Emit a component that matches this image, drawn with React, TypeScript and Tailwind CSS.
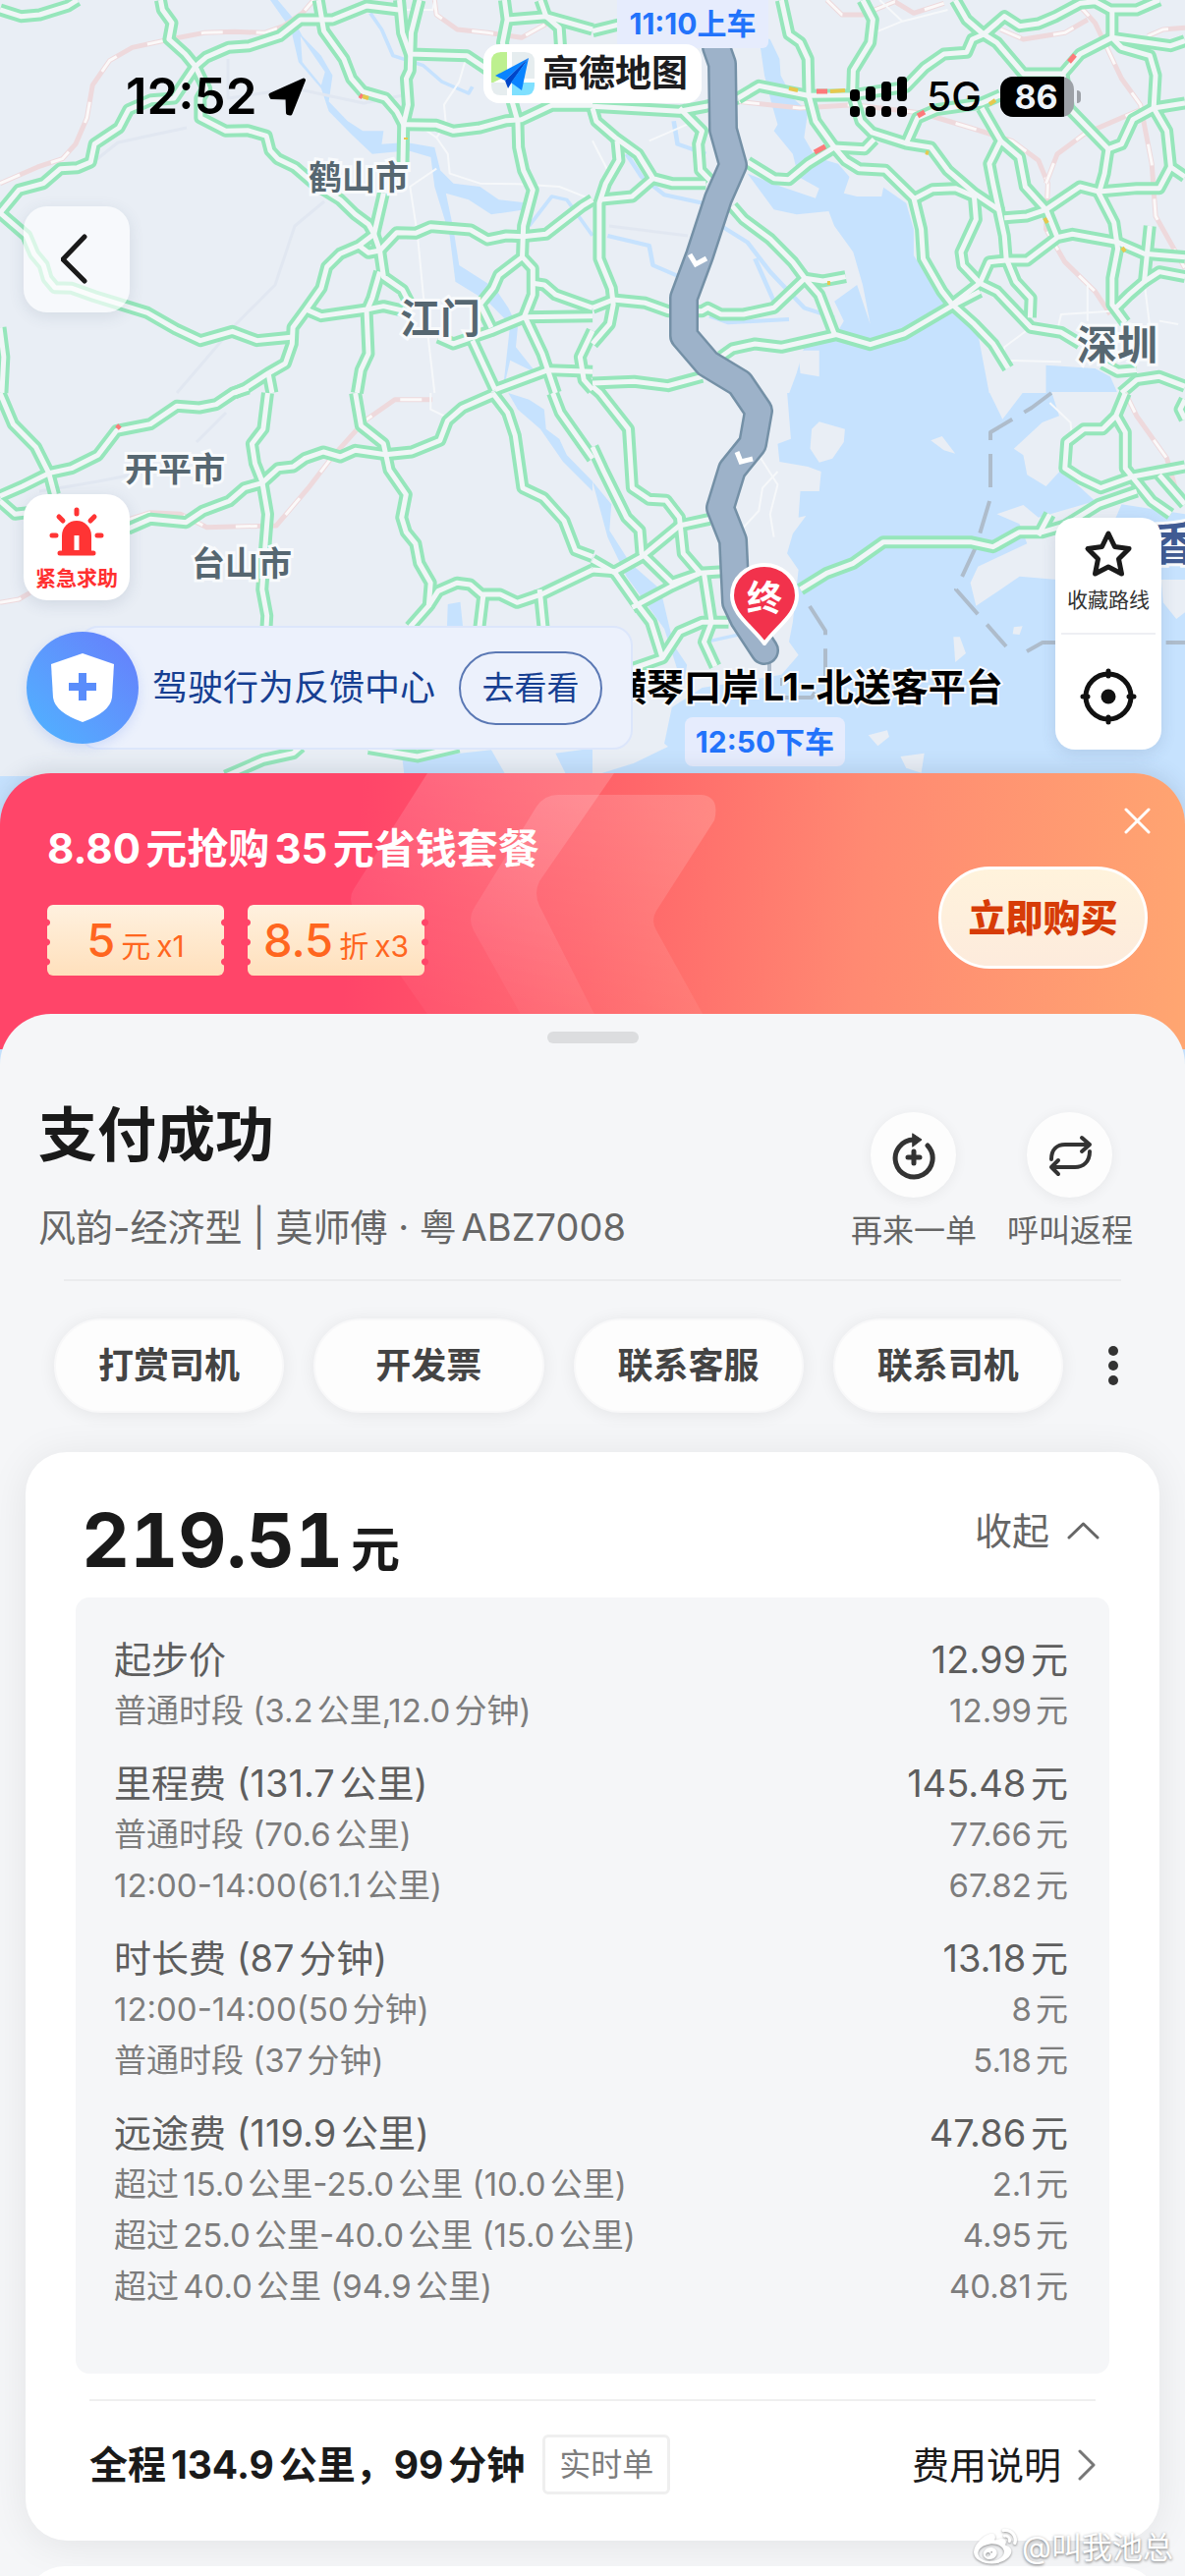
import type { ReactNode } from 'react';
import { FaWeibo } from 'react-icons/fa';

interface FareRow {
  label: string;
  price: string;
}

interface FareGroup extends FareRow {
  items: FareRow[];
}

interface MapTile {
  origin: string;
  roads: string[];
  lanes: string[];
  rails: string[];
}

const fareGroups: FareGroup[] = [
  {
    label: '起步价',
    price: '12.99元',
    items: [{ label: '普通时段 (3.2公里,12.0分钟)', price: '12.99元' }],
  },
  {
    label: '里程费 (131.7公里)',
    price: '145.48元',
    items: [
      { label: '普通时段 (70.6公里)', price: '77.66元' },
      { label: '12:00-14:00(61.1公里)', price: '67.82元' },
    ],
  },
  {
    label: '时长费 (87分钟)',
    price: '13.18元',
    items: [
      { label: '12:00-14:00(50分钟)', price: '8元' },
      { label: '普通时段 (37分钟)', price: '5.18元' },
    ],
  },
  {
    label: '远途费 (119.9公里)',
    price: '47.86元',
    items: [
      { label: '超过15.0公里-25.0公里 (10.0公里)', price: '2.1元' },
      { label: '超过25.0公里-40.0公里 (15.0公里)', price: '4.95元' },
      { label: '超过40.0公里 (94.9公里)', price: '40.81元' },
    ],
  },
];

const quickActions = ['打赏司机', '开发票', '联系客服', '联系司机'];

const routePath =
  'M728 20L729 48 735 65 736 132 746 168 731 202 712 260 696 303V342L720 370 753 390 772 418 766 452 745 478 733 517 746 550 749 613 757 630 778 662';

// Four map tiles, each drawn in its own grid and scaled into place
const tiles: MapTile[] = [
  {
    origin: 'translate(0 0) scale(0.3846 0.3333)',
    roads: [
      'M0 30L55 50 105 45 180 18 205 0',
      'M425 0L430 30 455 70 447 120 490 165 517 203 545 270 530 300 530 360 597 400 655 398 705 415 715 460 735 485 780 510 830 560 900 610 940 655 975 685 990 715 1005 765 1015 845 1065 885 1085 930',
      'M0 650L50 580 115 560 160 515 205 512 240 495 250 440 315 390 340 335 400 305 460 300 517 203 545 175 605 145 660 140 740 110 795 60 880 60 970 18 1055 30',
      'M843 0L857 95 910 180 930 240 960 280 1020 300 1050 340 1068 380',
      'M1057 0L1065 100 1085 165 1235 170 1300 220',
      'M1110 0L1088 100 1085 215 1075 240 1080 320 1068 380 1066 500',
      'M1068 380L1155 382 1200 400 1270 390 1340 368 1380 365 1460 322 1568 322',
      'M1015 590L990 715',
      'M1005 765L1050 710 1100 712 1140 692 1245 702 1290 732 1340 720 1385 722 1445 715 1540 630 1568 610',
      'M990 715L950 750 900 775 865 815 850 880 810 945 775 1000 773 1050 755 1110 710 1140 650 1185 620 1200',
      'M950 750L975 772 1005 765',
      'M1005 830L985 910 970 950 975 1080 955 1130 945 1200',
      'M810 945L850 965 970 945 1015 935 1090 955',
      'M0 650L70 720 90 775 115 810 125 850 145 878 190 880 250 905 390 955 465 1005 530 1040 615 1012 680 1040 770 1030',
      'M0 1000L10 1090 5 1200',
      'M710 1140L720 1200',
      'M1335 0L1342 60 1330 130 1345 270 1370 370 1372 450 1385 520 1410 580 1385 690 1382 785 1320 840 1305 880 1270 930 1300 1000',
      'M1382 785L1410 820 1410 900 1388 965 1435 1080 1470 1200',
      'M1430 0L1445 50 1480 85 1485 170',
      'M1342 60L1445 50 1568 90',
      'M1410 865L1440 870 1470 900 1568 940',
      'M1160 1030L1200 1050 1300 1010 1388 968 1568 965',
      'M1250 1040L1310 1190',
      'M1310 1190L1450 1130 1568 1135',
      'M1568 1010L1535 1090 1545 1160 1568 1190',
    ],
    lanes: [
      'M1235 170L1215 250 1175 320 1180 380 1155 420 1185 470 1190 530 1270 560 1370 562 1480 570 1568 610',
      'M1060 370L1130 400 1155 420',
      'M1155 515L1085 570 1105 720 1120 900 1150 1200',
      'M1055 30L1145 30 1150 0',
    ],
    rails: [
      'M0 560L100 510 165 485 200 440 230 360 245 260 290 185 350 145 450 120 540 100 620 97 700 100 750 80 800 40 830 0',
      'M1150 0L1155 45 1210 90 1290 100 1380 115 1450 70',
    ],
  },
  {
    origin: 'translate(603 0) scale(0.3846 0.3333)',
    roads: [
      'M500 0L520 105 550 130 570 180 572 290 590 370 640 450 670 490 705 515 775 520 850 605 870 700 875 790 925 890 952 930 1010 990 1060 1050 1100 1125',
      'M715 0L742 60 735 130 690 215 688 290 710 370 740 405 830 438 895 450 940 520 1010 590 1075 640 1090 720 1095 790 1120 860 1160 910 1158 970',
      'M385 300L440 262 570 292 690 290 830 265 880 205 930 165 990 160 1005 120 1035 105 1090 50 1130 80 1180 72 1225 50 1290 10 1330 5 1370 30 1440 30 1500 0',
      'M960 0L990 60 1035 105 1070 130 1140 225 1245 225 1290 165 1375 115 1530 140 1568 125',
      'M1375 30L1375 115 1400 145 1475 170 1490 230 1485 330 1520 400 1530 510 1568 540',
      'M1245 225L1260 330 1365 455 1400 440 1430 365 1485 330 1568 315',
      'M1365 455L1355 530 1340 590 1380 680 1390 760 1375 850 1375 930 1410 985',
      'M1530 510L1500 575 1440 575 1340 585 1290 570 1200 640 1150 660 1090 665',
      'M830 438L860 360 910 335 1030 315 1080 290',
      'M1030 330L1080 430 1050 500 1060 560 1075 640',
      'M1080 430L1130 480 1145 570 1200 640 1230 725',
      'M1095 795L1150 795 1230 725 1270 715 1390 740 1460 775 1568 785',
      'M1095 795L1050 800 1025 865 952 930',
      'M855 605L900 578 960 575 1010 600 1015 670 975 770 980 810 1025 865 1070 890 1160 1000 1240 1015 1290 1050',
      'M410 495L480 545 520 548 570 500 640 450 720 455 745 425',
      'M370 630L400 670 470 730 530 800 562 850 600 900 640 1020',
      'M562 850L610 858 670 845',
      'M0 940L55 915 140 925 200 950 290 950 305 940 340 960 400 960 480 940 562 850',
      'M340 1090L370 1065 430 1050 500 1060 645 1022 735 1052 825 1020 950 935 1025 890',
      'M0 1170L110 1165 200 1178 290 1150',
      'M0 330L10 370 60 420 120 470 160 545 210 560 300 560',
      'M0 325L230 340 300 325 385 300',
      'M230 330L290 400 280 440 285 520 310 550',
      'M65 430L70 490 35 560 18 620 18 790 50 880 55 930 45 990 0 1050',
      'M18 610L105 600 160 545',
      'M0 95L70 75',
      'M1475 690L1460 860 1420 900 1385 940',
      'M1460 860L1500 830 1568 845',
      'M1350 1110L1390 1135 1440 1130',
      'M1400 1200L1440 1160 1500 1150 1568 1180',
    ],
    lanes: [
      'M150 430L270 370 M745 100L820 65 940 30 M820 65L760 0',
      'M1160 1000L1090 1060 1085 1100 1240 1105 M1230 1010L1240 960 1370 950 1400 940',
      'M1460 860L1475 1000 1470 1060 M1310 870L1310 980 M1500 980L1550 990',
      'M0 430L40 520',
    ],
    rails: [
      'M385 310L550 330 690 320 870 345 1000 390 1110 430 1180 490 1205 560 1200 700 1250 800 1330 890 1370 960',
      'M1275 0L1330 70 1400 240 1450 320 1480 500 1490 660 1568 820',
      'M1200 560L1230 470 1300 410 1440 340 1568 310',
      'M1080 90L1140 120 1250 100 1310 60',
      'M620 0L660 45 715 45 800 5 850 40 930 10',
      'M1470 110L1510 90 1568 85',
    ],
  },
  {
    origin: 'translate(0 400) scale(0.3827 0.3333)',
    roads: [
      'M0 0L35 95 95 165 130 245 145 310',
      'M0 315L60 285 130 245 190 230 260 190 310 115 400 95 470 40 530 45 575 35 620 0 660 -15',
      'M0 330L40 370 75 365',
      'M712 0L700 110 670 155 678 215 697 270 712 370 705 470 697 600 710 680 708 720',
      'M340 415L400 385 495 395 540 360 610 330 650 290 697 275 740 230 780 225 810 200 860 180 905 195 945 175 1025 188 1095 180 1170 145 1190 85 1230 45 1310 5',
      'M945 0L960 100 1020 155 1035 235 1080 310 1068 380 1080 425 1105 460 1115 520 1145 580 1140 650 1090 715',
      'M1140 650L1165 605 1215 580 1250 585 1280 615 1330 615 1375 640 1440 615 1576 540',
      'M1285 620L1275 715',
      'M1435 600L1445 715',
      'M1310 0L1350 60 1370 130 1390 290 1445 320 1500 390 1530 480 1576 500',
      'M1470 0L1490 60 1576 200',
      'M600 1170L700 1120 780 1100 800 1080',
      'M980 1085L1110 1110 1220 1080',
    ],
    lanes: ['M1145 0L1145 50 1190 75'],
    rails: [
      'M0 640L50 630 80 610',
      'M345 385L400 365 480 370 550 410 735 405 820 290 880 200 970 85 1050 20 1150 20',
    ],
  },
  {
    origin: 'translate(603 400) scale(0.3846 0.3333)',
    roads: [
      'M0 -20L20 0 95 110 105 290 150 325 195 328 230 380 240 490 285 550 345 545',
      'M0 165L30 240 90 380 125 420 130 490 210 580 285 550',
      'M230 405L310 385',
      'M0 540L60 545 130 500 230 405',
      'M0 510L60 550 115 640 155 700 185 810',
      'M105 655L210 590 285 550',
      'M110 840L185 810 230 730 290 700 360 700',
      'M295 550L315 700 295 760 325 835',
      'M550 600L620 550 690 520 770 455 1000 455 1060 470 1130 425 1190 425 1250 405 1340 340 1440 300',
      'M1180 435L1210 370',
      'M1410 0L1385 70 1350 110 1300 110 1255 150 1250 230 1290 260 1345 290 1430 255 1568 225',
      'M1385 70L1410 120 1410 230 1480 330 1530 370',
      'M1500 250L1568 340',
      'M1568 20L1555 50 1568 80',
    ],
    lanes: [
      'M1210 30L1265 90 1270 150',
      'M440 190L490 280 470 370 480 440',
      'M490 240L450 290 440 360 400 410',
    ],
    rails: ['M1410 0L1440 70 1520 200 1545 300'],
  },
];

const cityLabels = [
  { name: '鹤山市', place: 'left-[314px] top-[160px] text-[34px]' },
  { name: '江门', place: 'left-[407px] top-[303px] text-[41px]' },
  { name: '深圳', place: 'left-[1096px] top-[330px] text-[41px]' },
  { name: '开平市', place: 'left-[127px] top-[457px] text-[34px]' },
  { name: '台山市', place: 'left-[195px] top-[553px] text-[34px]' },
];

const MapCanvas = () => (
  <svg
    className="absolute inset-x-0 top-0 h-[1120px] w-full bg-[#c6e2fe]"
    viewBox="0 0 1206 1120"
    preserveAspectRatio="xMidYMin slice"
    fill="none"
    strokeLinejoin="round"
    aria-hidden="true"
  >
    <path d="M0 0H1206V400H0ZM0 400H603V790H0Z" fill="#e9eef5" />
    <g transform="translate(603 0) scale(0.3846 0.3333)" fill="#c6e2fe">
      <path d="M440 110L470 120 495 180 498 230 530 300 570 340 560 420 590 480 650 500 680 540 665 590 700 600 765 600 770 572 830 620 850 700 850 780 900 870 950 940 1020 1020 1050 1202 520 1202 540 1140 560 1060 640 1030 665 980 640 920 700 870 735 990 715 870 690 770 640 690 625 645 540 655 480 640 410 530 500 570 590 605 600 575 545 540 530 470 480 400 490 380 475 320 455 230Z" />
      <path d="M1200 1115L1330 1125 1370 1150 1390 1202H1200Z" />
      <path d="M520 1090L545 1080 550 1140 600 1150 600 1070 560 1070Z" fill="#e9eef5" />
    </g>
    <g transform="translate(0 400) scale(0.3846 0.3333)" fill="#c6e2fe">
      <path d="M1185 645L1218 638 1225 715 1183 712ZM1065 1120L1300 1090 1340 1170H1070ZM1470 1100L1568 1085V1170H1500Z" />
      <path d="M1345 0L1400 20 1440 50 1445 110 1480 140 1500 190 1568 270V300L1490 210 1430 110 1370 50Z" />
    </g>
    <g transform="scale(0.3846 0.3333)">
      <path d="M715 0H735L775 55 800 110 850 170 880 230 870 310 920 370 960 400 1015 400 1010 440 1075 435 1150 450 1165 520 1200 560 1270 570 1320 610 1400 620 1390 640 1300 655 1240 610 1180 590 1200 700 1215 810 1310 880 1345 940 1370 1000 1365 1060 1420 1140 1350 1100 1330 1200 1350 990 1290 920 1205 860 1190 720 1150 570 1140 480 1080 460 985 470 930 410 870 340 850 270 790 190 770 90Z M795 110L800 190 850 260 860 220Z" fill="#c6e2fe" fillRule="evenodd" />
      <path d="M980 40L1010 90 1040 170 1120 200 1170 250 1240 285 1250 265M1400 690L1460 600 1500 610 1568 720" stroke="#c6e2fe" strokeWidth="10" />
    </g>
    <g transform="translate(603 0) scale(0.3846 0.3333)" stroke="#c6e2fe" strokeWidth="12">
      <path d="M90 470L130 540 190 595 310 625M340 690L410 740 470 830 560 940 640 970M310 965L360 985 520 975M430 790L480 920M40 720L150 750 160 810 240 850M215 370L225 440 300 470" />
    </g>

    {/* coastline and islands of the lower right tile */}
    <g transform="translate(603 400) scale(0.3846 0.3333)" fill="#e9eef5">
      <path d="M0 -3H515L525 140 490 155 495 210 570 225 605 240 600 300 550 300 545 380 565 375 530 430 515 490 545 540 530 700 520 760 545 800 500 860 400 880 290 900 210 960 190 1070 200 1080 110 1130 0 1170Z" />
      <path d="M580 110L600 88 668 110 665 150 635 200 600 212 576 170ZM895 145L925 132 960 185 930 175Z" />
      <path d="M1050 -3H1140L1085 80ZM1215 -3H1568V370L1400 340 1385 380 1300 400 1230 480V570L1130 560 1080 600 1015 650 1000 580 1020 530 1150 460 1130 400 1070 370 1140 342 1180 380 1270 350 1330 330 1240 235 1200 285 1150 250 1140 190 1115 170 1190 90 1235 70Z" />
      <path d="M955 745L972 745 988 795 960 822ZM730 1045L780 1030 785 1050 755 1078ZM815 1110L878 1100 870 1160 830 1145ZM1115 715L1138 712 1130 738 1112 736ZM1505 570L1568 570V670L1545 690 1510 640Z" />
      <path d="M0 270L50 340 45 420 100 520 180 600 215 770 250 830 240 900 190 720 90 560 40 440Z" fill="#c6e2fe" />
      <path d="M300 760L400 735" stroke="#c6e2fe" strokeWidth="10" />
    </g>
    <path d="M1070 400L1050 415 1008 440V507L993 557 973 600 1024 658M1045 663L1061 654H1206M824 617L840 642V690L826 710H796V690M783 665V700" stroke="#aebccb" strokeWidth="4" strokeDasharray="34 14" />
    <path d="M95 165L120 145 190 130M180 400L240 330 280 290 300 230 330 205M232 60V100L300 90 370 105 420 95M40 500L100 490 150 480M200 450L230 420M620 230L700 240" stroke="#e1e7f1" strokeWidth="3" />

    {tiles.map((tile) => (
      <g key={tile.origin} transform={tile.origin}>
        {tile.rails.map((d) => (
          <g key={d}>
            <path d={d} stroke="#eed9dc" strokeWidth="5" vectorEffect="non-scaling-stroke" />
            <path d={d} stroke="#fbf9f9" strokeWidth="3" strokeDasharray="22 34" vectorEffect="non-scaling-stroke" />
          </g>
        ))}
        {tile.lanes.map((d) => (
          <path key={d} d={d} stroke="#f6f8fa" strokeWidth="2" vectorEffect="non-scaling-stroke" />
        ))}
        {tile.roads.map((d) => (
          <path key={d} d={d} stroke="#96e6bb" strokeWidth="13" vectorEffect="non-scaling-stroke" />
        ))}
      </g>
    ))}
    {tiles.map((tile) => (
      <g key={tile.origin} transform={tile.origin}>
        {tile.roads.map((d) => (
          <path key={d} d={d} stroke="#f1f6f7" strokeWidth="5" vectorEffect="non-scaling-stroke" />
        ))}
      </g>
    ))}

    <path d="M366 97L369 99M829 155L840 149M831 93H842M934 118L941 114M1088 63L1094 56M119 436L122 433" stroke="#fd7a7a" strokeWidth="5" />
    <path d="M369 98L375 100M413 140V142M803 90L812 92M845 93L860 92M1007 106L1013 102M942 155L945 156M1063 222L1066 227M842 288H845M1142 252L1145 256" stroke="#e6c84e" strokeWidth="4" />

    <path d={routePath} stroke="#7490a6" strokeWidth="30" strokeLinecap="round" />
    <path d={routePath} stroke="#9db2c9" strokeWidth="25" strokeLinecap="round" />
    <path d="M702 259L708 269 719 263M750 460L754 470 766 467" stroke="#fff" strokeWidth="5" strokeLinejoin="miter" />

    <path d="M778 655C766 638 745 626 745 606A33 31 0 0 1 811 606C811 626 790 638 778 655Z" fill="#f2324c" stroke="#fff" strokeWidth="4" />
  </svg>
);

const StatusBar = () => (
  <div className="relative flex h-[64px] items-center justify-between pr-[106px] pl-[128px]">
    <div className="flex items-center gap-[12px]">
      <span className="text-[51px] leading-[60px] font-semibold text-black">12:52</span>
      <svg width="39" height="39" viewBox="0 0 39 39" aria-hidden="true">
        <path d="M36 2.500L2.500 17.500 3.500 20 19.500 20.500 20 36 22.500 36.500Z" fill="#000" stroke="#000" strokeWidth="4" strokeLinejoin="round" />
      </svg>
    </div>
    <div className="flex items-center gap-[19px]">
      <svg width="59" height="42" viewBox="0 0 59 42" aria-hidden="true">
        <rect x="0" y="14" width="10" height="12" rx="4" />
        <rect x="16" y="11" width="10" height="15" rx="4" />
        <rect x="32" y="6" width="10" height="20" rx="4" />
        <rect x="48" y="1" width="10" height="25" rx="4" />
        <rect x="0" y="31" width="10" height="11" rx="4" />
        <rect x="16" y="31" width="10" height="11" rx="4" />
        <rect x="32" y="31" width="10" height="11" rx="4" />
        <rect x="48" y="31" width="10" height="11" rx="4" />
      </svg>
      <span className="text-[41px] leading-[48px] font-medium text-black">5G</span>
      <div className="flex items-center gap-[3px]">
        <div className="flex h-[41px] w-[75px] overflow-hidden rounded-[13px] bg-[#9da1a7]">
          <span className="w-[65px] bg-black pl-[8px] text-center text-[34px] leading-[41px] font-bold text-[#eef3f8]">86</span>
        </div>
        <span className="h-[13px] w-[4px] rounded-r-full bg-[#9da1a7]" />
      </div>
    </div>
  </div>
);

const BrandTag = () => (
  <div className="absolute top-[45px] left-[492px] flex h-[60px] w-[222px] items-center gap-[8px] rounded-[16px] bg-white pl-[8px]">
    <svg width="44" height="44" viewBox="0 0 44 44" aria-hidden="true">
      <path d="M10 0H16V24L0 32V10Q0 0 10 0Z" fill="#bdf08f" />
      <path d="M21 0H34Q44 0 44 10V27H21Z" fill="#e6edef" />
      <path d="M21 31H44V34Q44 44 34 44H21Z" fill="#7fe0ff" />
      <path d="M0 31H16V44H10Q0 44 0 34Z" fill="#e6edef" />
      <path d="M38 6L4 24 14 29Z" fill="#0a84ff" />
      <path d="M38 6L14 29 17 37 20 32Z" fill="#0046c8" />
      <path d="M38 6L20 31 31 39Z" fill="#0a84ff" />
    </svg>
    <span className="text-[37px] leading-[44px] font-bold whitespace-nowrap text-[#1d1d1f]">高德地图</span>
  </div>
);

const ShieldIcon = () => (
  <svg width="64" height="70" viewBox="0 0 64 70" aria-hidden="true">
    <path d="M32 0L64 11 62 45Q60 60 32 70Q4 60 2 45L0 11Z" fill="#fff" />
    <path d="M32 20V48M18 34H46" stroke="#5a8dfb" strokeWidth="8" />
  </svg>
);

const MapControls = () => (
  <>
    <button type="button" aria-label="返回" className="absolute top-[210px] left-[24px] flex h-[108px] w-[108px] items-center justify-center rounded-[24px] bg-white/65 shadow-[0_4px_16px_rgba(60,80,110,0.12)]">
      <svg width="32" height="52" viewBox="0 0 32 52" fill="none" stroke="#1a1a1a" strokeWidth="5" strokeLinecap="round" strokeLinejoin="round" aria-hidden="true">
        <path d="M24 3L2 26 24 48" />
      </svg>
    </button>
    <button type="button" className="absolute top-[503px] left-[24px] flex h-[108px] w-[108px] flex-col items-center rounded-[24px] bg-white pt-[13px] shadow-[0_4px_16px_rgba(60,80,110,0.14)]">
      <svg width="56" height="50" viewBox="0 0 56 50" fill="none" stroke="#ff3434" strokeWidth="5" strokeLinecap="round" aria-hidden="true">
        <path d="M28 3V7M10 10L14 14M46 10L42 14M3 29H7M49 29H53M11 47H45" />
        <path d="M13 46V29A15 15 0 0 1 43 29V46Z" fill="#ff3434" stroke="none" />
        <path d="M28 29V44" stroke="#fff" strokeLinecap="butt" />
      </svg>
      <span className="mt-[8px] text-[21px] leading-[30px] font-bold text-[#ff3030]">紧急求助</span>
    </button>
    <div className="absolute top-[527px] right-[24px] flex h-[236px] w-[108px] flex-col items-center rounded-[20px] bg-white shadow-[0_4px_16px_rgba(60,80,110,0.14)]">
      <button type="button" className="flex flex-col items-center pt-[12px]">
        <svg width="50" height="50" viewBox="0 0 50 50" fill="none" stroke="#1a1a1a" strokeWidth="5" strokeLinejoin="round" aria-hidden="true">
          <path d="M25 4L31.500 17.500 46 19.500 35.500 30 38.500 45 25 38 11.500 45 14.500 30 4 19.500 18.500 17.500Z" />
        </svg>
        <span className="mt-[7px] text-[21px] leading-[30px] text-[#333]">收藏路线</span>
      </button>
      <div className="mt-[18px] h-[2px] w-[96px] bg-[#eeeff3]" />
      <button type="button" aria-label="定位" className="flex flex-1 items-center pt-[8px]">
        <svg width="58" height="58" viewBox="0 0 58 58" fill="none" stroke="#111" strokeWidth="5" strokeLinecap="round" aria-hidden="true">
          <circle cx="29" cy="29" r="23" />
          <path d="M29 3V8M29 50V55M3 29H8M50 29H55" />
          <circle cx="29" cy="29" r="7.500" fill="#111" stroke="none" />
        </svg>
      </button>
    </div>
    <div className="absolute top-[637px] left-[27px] flex h-[126px] items-center">
      <div className="absolute inset-y-0 right-0 left-[53px] rounded-[20px] border-2 border-[#dce6fb] bg-[#ecf1fc]" />
      <div className="relative flex h-[114px] w-[114px] items-center justify-center rounded-full bg-linear-to-tr from-[#4db4ff] to-[#667cfb] shadow-[0_4px_12px_rgba(90,130,240,0.2)]">
        <ShieldIcon />
      </div>
      <span className="relative ml-[14px] text-[36px] leading-[48px] text-[#163f92]">驾驶行为反馈中心</span>
      <button type="button" className="relative mr-[31px] ml-[24px] h-[75px] w-[146px] rounded-full border-2 border-[#5a78b4] text-[33px] leading-[48px] text-[#163f92]">
        去看看
      </button>
    </div>
  </>
);

const MapOverlay = () => (
  <section className="relative h-[787px] overflow-hidden">
    {cityLabels.map((city) => (
      <span key={city.name} className={`absolute leading-[42px] font-bold whitespace-nowrap text-[#566771] [-webkit-text-stroke:6px_#f8fafc] [paint-order:stroke_fill] ${city.place}`}>
        {city.name}
      </span>
    ))}
    <span className="absolute top-[525px] left-[1172px] text-[46px] leading-[56px] font-bold whitespace-nowrap text-[#405b93] [-webkit-text-stroke:6px_#f8fafc] [paint-order:stroke_fill]">香</span>
    <span className="absolute top-[585px] left-[760px] text-[36px] leading-[48px] font-bold text-white">终</span>
    <span className="absolute top-[675px] left-[620px] text-[38px] leading-[48px] font-bold whitespace-nowrap text-black [-webkit-text-stroke:4px_#f8fafc] [paint-order:stroke_fill]">横琴口岸L1-北送客平台</span>
    <span className="absolute top-0 left-[628px] h-[49px] w-[154px] rounded-b-[6px] bg-[#e6ecfd] text-center text-[30px] leading-[48px] font-bold text-[#2273fb] [text-autospace:no-autospace]">11:10上车</span>
    <span className="absolute top-[730px] left-[697px] h-[50px] w-[163px] rounded-[8px] bg-[#e6ecfd] text-center text-[30px] leading-[50px] font-bold text-[#2273fb] [text-autospace:no-autospace]">12:50下车</span>
    <BrandTag />
    <div className="pt-[66px]">
      <StatusBar />
    </div>
    <MapControls />
  </section>
);

const Coupon = ({ value, unit, count }: { value: string; unit: string; count: string }) => (
  <div className="relative flex h-[72px] w-[180px] items-baseline justify-center gap-[6px] rounded-[6px] bg-linear-to-b from-[#fff1df] to-[#ffe0bc] text-[30px] leading-[72px] text-[#ff661f]">
    <span className="absolute top-[8px] -left-[4px] h-[60px] w-[7px] bg-[radial-gradient(circle_at_center,#ff4569_3px,transparent_4px)] bg-[length:7px_20px]" />
    <span className="absolute top-[8px] -right-[4px] h-[60px] w-[7px] bg-[radial-gradient(circle_at_center,#ff4569_3px,transparent_4px)] bg-[length:7px_20px]" />
    <span className="text-[47px] font-medium">{value}</span>
    <span>{unit}</span>
    <span>{count}</span>
  </div>
);

const PromoBanner = () => (
  <section className="relative flex h-[281px] justify-between overflow-hidden rounded-t-[52px] bg-[linear-gradient(95deg,#ff4569_0%,#ff4569_30%,#ff6269_50%,#ff8972_72%,#ffa671_100%)] pr-[38px] pl-[48px] shadow-[0_-4px_20px_rgba(60,80,110,0.15)]">
    <svg className="absolute top-0 left-[340px]" width="420" height="281" viewBox="0 0 420 281" aria-hidden="true">
      <defs>
        <linearGradient id="wing" x1="0.6" y1="0" x2="0.3" y2="1">
          <stop offset="0" stopColor="#fff" stopOpacity="0.16" />
          <stop offset="1" stopColor="#fff" stopOpacity="0.02" />
        </linearGradient>
      </defs>
      <path d="M95 0H285L209 110Q203 122 209 135L283 281H120L20 138Q14 128 20 118Z" fill="url(#wing)" />
      <path d="M228 22H374Q393 24 387 48L328 140Q322 150 328 160L395 281H210L142 160Q136 148 142 138L206 34Q214 22 228 22Z" fill="url(#wing)" />
    </svg>
    <div className="relative pt-[53px]">
      <h2 className="text-[42px] leading-[48px] font-bold whitespace-nowrap text-white">8.80元抢购35元省钱套餐</h2>
      <div className="mt-[33px] flex gap-[24px]">
        <Coupon value="5" unit="元" count="x1" />
        <Coupon value="8.5" unit="折" count="x3" />
      </div>
    </div>
    <div className="relative flex flex-col items-end">
      <button type="button" aria-label="关闭" className="mt-[34px] -mr-[4px] p-[1px]">
        <svg width="27" height="27" viewBox="0 0 27 27" stroke="#fff" strokeWidth="3" strokeLinecap="round" aria-hidden="true">
          <path d="M2 2L25 25M25 2L2 25" />
        </svg>
      </button>
      <button type="button" className="mt-[32px] h-[104px] w-[213px] rounded-full border-[3px] border-white bg-linear-to-b from-[#fff3dc] to-[#fdebdc] text-[38px] leading-[48px] font-black text-[#d73c07]">
        立即购买
      </button>
    </div>
  </section>
);

const RoundAction = ({ label, children }: { label: string; children: ReactNode }) => (
  <button type="button" className="flex flex-col items-center">
    <span className="flex h-[87px] w-[87px] items-center justify-center rounded-full bg-[#fdfdfd] shadow-[0_2px_14px_rgba(0,0,0,0.06)]">
      {children}
    </span>
    <span className="mt-[14px] text-[32px] leading-[40px] text-[#666]">{label}</span>
  </button>
);

const TripHeader = () => (
  <header className="flex items-end justify-between pr-[53px] pl-[39px]">
    <div>
      <h1 className="text-[60px] leading-[72px] font-bold text-[#1a1a1a]">支付成功</h1>
      <p className="mt-[34px] text-[38px] leading-[48px] text-[#666]">风韵-经济型 | 莫师傅 · 粤ABZ7008</p>
    </div>
    <div className="flex gap-[31px]">
      <RoundAction label="再来一单">
        <svg width="50" height="50" viewBox="0 0 50 50" fill="none" stroke="#333" strokeWidth="5" strokeLinecap="round" aria-hidden="true">
          <path d="M39 15A19 19 0 1 1 25 9M25 21V33M19 27H31" />
          <path d="M24 3L33 9 24 16Z" fill="#333" strokeWidth="1" strokeLinejoin="round" />
        </svg>
      </RoundAction>
      <RoundAction label="呼叫返程">
        <svg width="50" height="50" viewBox="0 0 50 50" fill="none" stroke="#333" strokeWidth="4" strokeLinecap="round" strokeLinejoin="round" aria-hidden="true">
          <path d="M6 29C6 19 12 14 20 14H45M37 7L45 14 37 21M45 21C45 32 38 37 30 37H6M13 30L6 37 13 44" />
        </svg>
      </RoundAction>
    </div>
  </header>
);

const FareTable = () => (
  <table className="w-full border-separate border-spacing-0">
    {fareGroups.map((group, index) => (
      <tbody key={group.label}>
        <tr className="text-[38px] leading-[52px] text-[#5e5e5e]">
          <th scope="row" className={index > 0 ? 'pt-[22px] text-left font-normal' : 'text-left font-normal'}>{group.label}</th>
          <td className={index > 0 ? 'pt-[22px] text-right' : 'text-right'}>{group.price}</td>
        </tr>
        {group.items.map((item) => (
          <tr key={item.label} className="text-[33px] leading-[52px] text-[#7d7d7d]">
            <td>{item.label}</td>
            <td className="text-right">{item.price}</td>
          </tr>
        ))}
      </tbody>
    ))}
  </table>
);

const FareCard = () => (
  <section className="mx-[26px] mt-[40px] rounded-[42px] bg-white px-[51px] pt-[39px] pb-[47px] shadow-[0_4px_40px_rgba(0,0,0,0.08)]">
    <div className="flex h-[96px] items-start justify-between pr-[10px] pl-[6px]">
      <p className="flex items-baseline gap-[8px] leading-[100px] font-bold text-[#1a1a1a]">
        <span className="text-[76px] tabular-nums">219.51</span>
        <span className="text-[50px]">元</span>
      </p>
      <button type="button" className="mt-[17px] flex items-center gap-[18px] text-[38px] leading-[48px] text-[#666]">
        收起
        <svg width="33" height="20" viewBox="0 0 33 20" fill="none" stroke="#666" strokeWidth="3" strokeLinecap="round" strokeLinejoin="round" aria-hidden="true">
          <path d="M2 17L16.500 3 31 17" />
        </svg>
      </button>
    </div>
    <div className="mt-[13px] rounded-[14px] bg-[#f5f6f8] pt-[37px] pr-[42px] pb-[63px] pl-[39px]">
      <FareTable />
    </div>
    <div className="mx-[14px] mt-[26px] h-[2px] bg-[#efefef]" />
    <div className="mx-[14px] mt-[34px] flex h-[61px] items-center justify-between">
      <div className="flex items-center gap-[18px]">
        <span className="text-[39px] leading-[48px] font-bold text-[#1a1a1a]">全程134.9公里，99分钟</span>
        <span className="rounded-[6px] border-[3px] border-[#efefef] px-[14px] text-[32px] leading-[55px] text-[#7d7d7d]">实时单</span>
      </div>
      <a href="#fare" className="flex items-center gap-[17px] text-[38px] leading-[48px] text-[#1a1a1a]">
        费用说明
        <svg width="18" height="32" viewBox="0 0 18 32" fill="none" stroke="#777" strokeWidth="3" strokeLinecap="round" strokeLinejoin="round" aria-hidden="true">
          <path d="M2 2L16 16 2 30" />
        </svg>
      </a>
    </div>
  </section>
);

export default function App() {
  return (
    <main className="relative flex h-screen flex-col overflow-hidden bg-[#c6e2fe] font-[Inter,'Noto_Sans_CJK_SC',sans-serif] [text-autospace:normal]">
      <MapCanvas />
      <MapOverlay />
      <PromoBanner />
      <div className="relative -mt-[36px] flex-1 overflow-hidden rounded-t-[52px] bg-[#f5f6f8] pt-[18px]">
        <div className="mx-auto h-[12px] w-[93px] rounded-full bg-[#dcdddf]" />
        <div className="mt-[57px]">
          <TripHeader />
        </div>
        <div className="mx-[65px] mt-[29px] h-[2px] bg-[#ebecee]" />
        <div className="mt-[38px] flex items-center pr-[68px] pl-[55px]">
          <div className="grid flex-1 grid-cols-4 gap-[30px]">
            {quickActions.map((action) => (
              <button key={action} type="button" className="h-[96px] rounded-full border-2 border-[#f8f8f9] bg-[#fdfdfd] text-[36px] leading-[48px] font-bold text-[#444] shadow-[0_2px_18px_rgba(0,0,0,0.07)]">
                {action}
              </button>
            ))}
          </div>
          <button type="button" aria-label="更多" className="ml-[46px] flex w-[10px] flex-col gap-[5px]">
            <span className="h-[10px] rounded-full bg-[#333]" />
            <span className="h-[10px] rounded-full bg-[#333]" />
            <span className="h-[10px] rounded-full bg-[#333]" />
          </button>
        </div>
        <FareCard />
        <div className="mx-[26px] mt-[26px] h-[80px] rounded-[42px] bg-white" />
      </div>
      <div className="absolute right-[12px] bottom-[7px] flex items-center gap-[5px] text-[31px] leading-[40px] text-white [text-shadow:0_1px_3px_rgba(0,0,0,0.55)]">
        <FaWeibo className="h-[44px] w-[44px] drop-shadow-[0_1px_1px_rgba(0,0,0,0.4)]" />
        @叫我池总
      </div>
    </main>
  );
}
